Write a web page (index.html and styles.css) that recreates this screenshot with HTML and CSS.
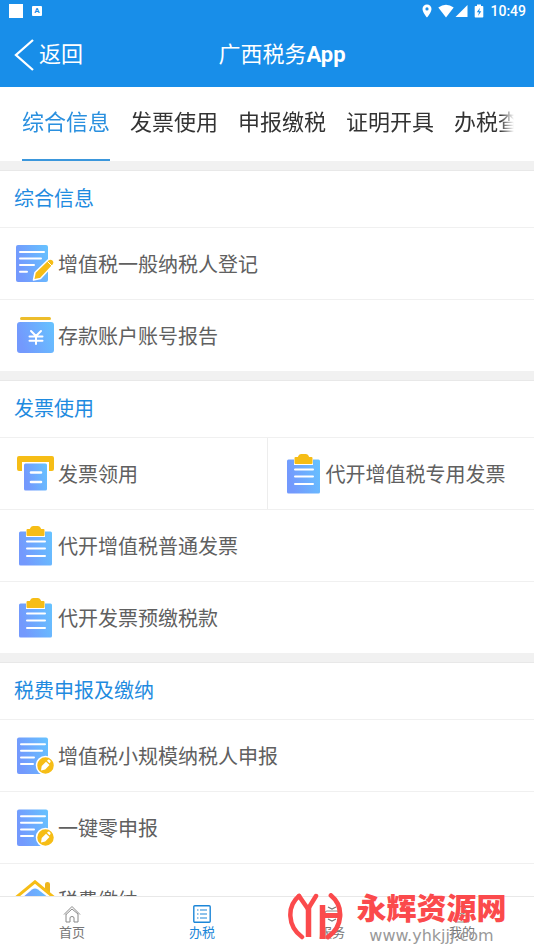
FILE: index.html
```html
<!DOCTYPE html>
<html lang="zh-CN">
<head>
<meta charset="utf-8">
<meta name="viewport" content="width=device-width, initial-scale=1">
<title>广西税务App</title>
<link rel="stylesheet" href="styles.css">
</head>
<body>
<svg class="defs" aria-hidden="true">
  <defs>
    <linearGradient id="blue" x1="0" y1="0.3" x2="1" y2="0">
      <stop offset="0" stop-color="#7399fd"/>
      <stop offset="1" stop-color="#66c3ff"/>
    </linearGradient>
    <symbol id="i-edit" viewBox="0 0 40 40">
      <rect x="1" y="1" width="32" height="37" rx="2" fill="url(#blue)"/>
      <path d="M5 8h24M5 14.500h21M5 21h14M5 27.700h7" stroke="#fff" stroke-width="2" stroke-linecap="round"/>
      <path d="M18.500 36l1.500-7.500L33.500 15.500q2.500-1.500 4.500.5t.5 4.500L25.500 34.500z" fill="#f6bd16" stroke="#fff" stroke-width="1.500" stroke-linejoin="round"/>
      <path d="M32.500 17.500l4.500 4.500" stroke="#fff" stroke-width="1"/>
    </symbol>
    <symbol id="i-account" viewBox="0 0 40 40">
      <rect x="5" y="1" width="31" height="3" rx="1.500" fill="#edbd2b"/>
      <rect x="2" y="6" width="37" height="31" rx="3" fill="url(#blue)"/>
      <path d="M16 15l5 5 5-5M14.500 20.500h13M14.500 24.800h13M21 20v8" fill="none" stroke="#fff" stroke-width="2" stroke-linecap="round"/>
    </symbol>
    <symbol id="i-printer" viewBox="0 0 40 40">
      <path d="M4 2h33a2 2 0 0 1 2 2v11a2 2 0 0 1-2 2h-3V8H7v9H4a2 2 0 0 1-2-2V4a2 2 0 0 1 2-2z" fill="#f6bd16"/>
      <rect x="9" y="9.500" width="23" height="27" rx="1.500" fill="url(#blue)"/>
      <path d="M16 18.500h10M16 28h10" stroke="#fff" stroke-width="2.600" stroke-linecap="round"/>
    </symbol>
    <symbol id="i-clipboard" viewBox="0 0 40 40">
      <rect x="4" y="5.500" width="33" height="34" rx="1.500" fill="url(#blue)"/>
      <path d="M12 2.500h2.500Q15.500 0 18 0h5q2.500 0 3.500 2.500H29q1 0 1 1.500v7H11V4q0-1.500 1-1.500z" fill="#fff"/>
      <path d="M12.500 3h2.300Q15.800 0 18 0h5q2.200 0 3.200 3h2.300q1 0 1 1v5q0 1-1 1h-16q-1 0-1-1V4q0-1 1-1z" fill="#f6bd16"/>
      <path d="M12 15.500h18M12 22.500h18M12 30h18" stroke="#fff" stroke-width="2" stroke-linecap="round"/>
    </symbol>
    <symbol id="i-declare" viewBox="0 0 40 40">
      <rect x="2" y="1.500" width="31" height="36.500" rx="2" fill="url(#blue)"/>
      <path d="M6 8.300h24M6 14.800h21M6 21.400h13M6 28h12" stroke="#fff" stroke-width="2" stroke-linecap="round"/>
      <circle cx="30.500" cy="29.500" r="9" fill="#f6bd16" stroke="#fff" stroke-width="1.500"/>
      <path d="M26 34.500l.7-4.500 4.300-4.300 3.500 3.300-4.300 4.500zM32 24.700l1-1q1-.4 2 .5t.4 2l-1 1z" fill="#fff"/>
    </symbol>
    <symbol id="i-house" viewBox="0 0 40 40">
      <path d="M30 4q0-2 2.500-2T35 4v10l-5-5z" fill="#edb51e"/>
      <path d="M7 18L17 9.500q3-2 6 0L34 18v20H7z" fill="url(#blue)"/>
      <path d="M1 17.500L20 1.800l19 15.700" fill="none" stroke="#f6bd16" stroke-width="3"/>
    </symbol>
  </defs>
</svg>

<header class="header">
  <div class="status">
    <div class="status-group">
      <span class="status-block"></span>
      <span class="status-app">A</span>
    </div>
    <div class="status-group status-right">
      <svg class="s-pin" viewBox="0 0 10 14"><path d="M5 .5A4.500 4.500 0 0 0 .5 5c0 3.300 4.500 8.500 4.500 8.500S9.500 8.300 9.500 5A4.500 4.500 0 0 0 5 .5zm0 6a1.600 1.600 0 1 1 0-3.200 1.600 1.600 0 0 1 0 3.200z" fill="#fff"/></svg>
      <svg class="s-wifi" viewBox="0 0 16 14"><path d="M8 13.500L.3 3.500Q8-2 15.700 3.500z" fill="#fff"/></svg>
      <svg class="s-signal" viewBox="0 0 13 14"><path d="M12.500 1v12H.5z" fill="#fff"/></svg>
      <svg class="s-battery" viewBox="0 0 10 14"><path d="M3 .5h4V2h1.500q.8 0 .8.800v9.900q0 .8-.8.800h-7q-.8 0-.8-.8V2.800Q.7 2 1.500 2H3z" fill="#fff"/><path d="M6 3.800L2.800 8.300H5L4 12l3.300-4.700H5.200z" fill="#188ee9"/></svg>
      <span class="clock">10:49</span>
    </div>
  </div>
  <div class="bar">
    <button class="back" type="button">
      <svg viewBox="0 0 20 32"><path d="M19 1L2 16l17 15" fill="none" stroke="#fff" stroke-width="2.300"/></svg>
      <span>返回</span>
    </button>
    <h1 class="title">广西税务<b>App</b></h1>
  </div>
</header>

<nav class="tabs">
  <div class="tabs-scroll">
    <a class="tab tab-active" href="#info">综合信息</a>
    <a class="tab" href="#invoice">发票使用</a>
    <a class="tab" href="#declare">申报缴税</a>
    <a class="tab" href="#proof">证明开具</a>
    <a class="tab" href="#query">办税查询</a>
  </div>
</nav>

<main class="content">
  <section class="section" id="info">
    <h2 class="section-title">综合信息</h2>
    <div class="row"><a class="item" href="#"><svg class="icon"><use href="#i-edit"/></svg>增值税一般纳税人登记</a></div>
    <div class="row"><a class="item" href="#"><svg class="icon"><use href="#i-account"/></svg>存款账户账号报告</a></div>
  </section>
  <section class="section" id="invoice">
    <h2 class="section-title">发票使用</h2>
    <div class="row">
      <a class="item" href="#"><svg class="icon"><use href="#i-printer"/></svg>发票领用</a>
      <a class="item" href="#"><svg class="icon"><use href="#i-clipboard"/></svg>代开增值税专用发票</a>
    </div>
    <div class="row"><a class="item" href="#"><svg class="icon"><use href="#i-clipboard"/></svg>代开增值税普通发票</a></div>
    <div class="row"><a class="item" href="#"><svg class="icon"><use href="#i-clipboard"/></svg>代开发票预缴税款</a></div>
  </section>
  <section class="section" id="declare">
    <h2 class="section-title">税费申报及缴纳</h2>
    <div class="row"><a class="item" href="#"><svg class="icon"><use href="#i-declare"/></svg>增值税小规模纳税人申报</a></div>
    <div class="row"><a class="item" href="#"><svg class="icon"><use href="#i-declare"/></svg>一键零申报</a></div>
    <div class="row"><a class="item" href="#"><svg class="icon"><use href="#i-house"/></svg>税费缴纳</a></div>
  </section>
</main>

<nav class="bottom">
  <a class="nav-item" href="#">
    <svg viewBox="0 0 18 18"><path d="M1 9.500L9 1.500l8 8M3 9v8h4v-4q0-1.500 2-1.500t2 1.500v4h4V9L9 4 3 9.500" fill="none" stroke="#8a8a8a"/></svg>
    首页
  </a>
  <a class="nav-item nav-active" href="#">
    <svg viewBox="0 0 18 18"><rect x=".8" y=".8" width="16.400" height="16.400" rx="1" fill="none" stroke="#1c86d8" stroke-width="1.400"/><path d="M7 5h7M7 9h7M7 13h7M4 5h1.500M4 9h1.500M4 13h1.500" stroke="#1c86d8" stroke-width="1.200"/></svg>
    办税
  </a>
  <a class="nav-item" href="#">
    <svg viewBox="0 0 18 18"><path d="M5 2l4 2 4-2M5 14l4 2 4-2" fill="none" stroke="#777" stroke-width="1.200"/><rect x="2" y="6" width="14" height="6" rx="2" fill="none" stroke="#8a8a8a"/></svg>
    服务
  </a>
  <a class="nav-item" href="#">
    <svg viewBox="0 0 18 18"><circle cx="9" cy="5" r="4" fill="none" stroke="#8a8a8a"/><path d="M2 17q0-7 7-7t7 7z" fill="none" stroke="#8a8a8a"/></svg>
    我的
  </a>
</nav>

<div class="mark">
  <svg class="mark-logo" viewBox="0 0 56 48">
    <g fill="none" stroke="#fb4a4c" stroke-linecap="round">
      <path d="M11 3C-1 13-1 33 14 44" stroke-width="4.500"/>
      <path d="M11 3L20 16L28 3" stroke-width="4.500" stroke-linejoin="round"/>
      <path d="M20.500 14v30" stroke-width="5.500" stroke-linecap="butt"/>
      <path d="M34.500 12v34" stroke-width="5.500" stroke-linecap="butt"/>
      <path d="M34 22.500h18" stroke-width="5" stroke-linecap="butt"/>
      <path d="M43 2.500C56 13 55 34 40 44" stroke-width="4.800"/>
    </g>
  </svg>
  <div class="mark-text">
    <strong>永辉资源网</strong>
    <span>www.yhkjjj.com</span>
  </div>
</div>
</body>
</html>
```
FILE: styles.css
```css
* {
  box-sizing: border-box;
}

body {
  margin: 0;
  height: 100vh;
  display: flex;
  flex-direction: column;
  position: relative;
  overflow: hidden;
  background: #fff;
  color: #606060;
  font-family: Roboto, "Noto Sans CJK SC", sans-serif;
  font-size: 20px;
}

a {
  color: inherit;
  text-decoration: none;
}

.defs {
  position: absolute;
  width: 0;
  height: 0;
}

/* Header */
.header {
  flex: none;
  background: #188ee9;
  color: #fff;
}

.status {
  display: flex;
  justify-content: space-between;
  height: 22px;
  padding: 0 8px 0 9px;
}

.status-group {
  display: flex;
  align-items: center;
}

.status-block {
  width: 14px;
  height: 14px;
  background: #fff;
}

.status-app {
  width: 10px;
  height: 10px;
  margin-left: 9px;
  border-radius: 1px;
  background: #fff;
  color: #188ee9;
  font-size: 8px;
  font-weight: 700;
  line-height: 10px;
  text-align: center;
}

.status-right svg {
  height: 14px;
}

.s-pin {
  width: 10px;
  margin-right: 6px;
}

.s-wifi {
  width: 16px;
  margin-right: 1px;
}

.s-signal {
  width: 13px;
  margin-right: 6px;
}

.s-battery {
  width: 10px;
}

.clock {
  margin-left: 6px;
  font-size: 14px;
  font-weight: 500;
}

.bar {
  display: grid;
  grid-template-columns: 1fr auto 1fr;
  align-items: center;
  height: 65px;
  padding: 0 14px;
}

.back {
  display: flex;
  align-items: center;
  gap: 5px;
  padding: 0;
  border: 0;
  background: none;
  color: inherit;
  font: inherit;
  font-size: 22px;
  line-height: 32px;
}

.back svg {
  width: 20px;
  height: 32px;
}

.title {
  margin: 0;
  padding-left: 30px;
  font-size: 22px;
  font-weight: 400;
  line-height: 32px;
}

/* Category tabs */
.tabs {
  flex: none;
  padding: 0 20px 0 22px;
}

.tabs-scroll {
  display: flex;
  gap: 20px;
  overflow: hidden;
  -webkit-mask-image: linear-gradient(to left, transparent, #000 14px);
  mask-image: linear-gradient(to left, transparent, #000 14px);
}

.tab {
  flex: none;
  height: 74px;
  border-bottom: 2px solid transparent;
  color: #333;
  font-size: 22px;
  line-height: 72px;
}

.tab-active {
  border-color: #3b97dc;
  color: #2a90df;
}

/* Grouped services */
.content {
  flex: 1;
  min-height: 0;
  overflow: hidden;
  background: #f1f1f1;
}

.section {
  margin-top: 9px;
  background: #fff;
}

.section-title {
  margin: 0;
  padding: 0 14px;
  border-top: 1px solid #e8e8e8;
  border-bottom: 1px solid #f0f0f0;
  color: #1f8be0;
  font-size: 20px;
  font-weight: 400;
  line-height: 56px;
}

.row {
  display: flex;
  border-bottom: 1px solid #f0f0f0;
}

.row:last-child {
  border-bottom: 0;
}

.item {
  flex: 1;
  display: flex;
  align-items: center;
  gap: 3px;
  height: 71px;
  padding-left: 15px;
  white-space: nowrap;
}

.item + .item {
  border-left: 1px solid #ededed;
}

.icon {
  flex: none;
  width: 40px;
  height: 40px;
}

/* Bottom navigation */
.bottom {
  flex: none;
  display: flex;
  height: 54px;
  padding: 0 7px;
  border-top: 1px solid #e8e8e8;
  background: #fff;
}

.nav-item {
  flex: 1;
  display: flex;
  flex-direction: column;
  align-items: center;
  padding-top: 8px;
  color: #777;
  font-size: 13px;
  line-height: 20px;
}

.nav-item svg {
  width: 18px;
  height: 18px;
}

.nav-active {
  color: #1c86d8;
}

/* Site mark laid over the navigation */
.mark {
  position: absolute;
  right: 27px;
  bottom: 6px;
  display: flex;
  align-items: center;
  gap: 12px;
  pointer-events: none;
}

.mark-logo {
  width: 56px;
  height: 48px;
}

.mark-text {
  display: flex;
  flex-direction: column;
  align-items: center;
  width: 151px;
}

.mark-text strong {
  color: #fb4a4c;
  font-size: 30px;
  font-weight: 900;
  line-height: 38px;
}

.mark-text span {
  color: #999;
  font-family: "DejaVu Sans", sans-serif;
  font-size: 16px;
  line-height: 16px;
}
```
